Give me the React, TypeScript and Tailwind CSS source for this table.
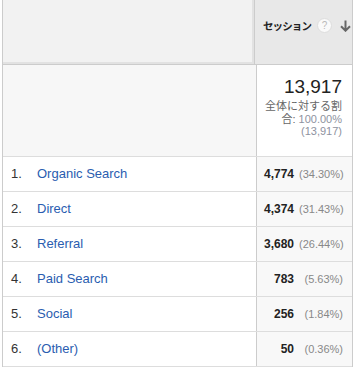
const rows = [
  { name: "Organic Search", value: "4,774", pct: "(34.30%)" },
  { name: "Direct", value: "4,374", pct: "(31.43%)" },
  { name: "Referral", value: "3,680", pct: "(26.44%)" },
  { name: "Paid Search", value: "783", pct: "(5.63%)" },
  { name: "Social", value: "256", pct: "(1.84%)" },
  { name: "(Other)", value: "50", pct: "(0.36%)" },
];

const font = { fontFamily: '"Liberation Sans", Arial, "Noto Sans CJK JP", sans-serif' };

export default function App() {
  return (
    <div className="h-[369px] w-[355px] overflow-hidden bg-white pl-[2px]" style={font}>
      <div className="w-[351px] border-x border-[#cccccc]">
        {/* header */}
        <div className="flex h-[65px] border-b border-[#cccccc]">
          <div className="w-[251px] border-b-2 border-r-2 border-[#e2e2e2] bg-[#f2f2f2]" />
          <div className="flex flex-1 items-center whitespace-nowrap border-l border-[#cccccc] bg-[#e8e8e8] pb-[13px] pl-[8px]">
            <span className="text-[10.5px] font-bold tracking-[-0.9px] text-[#222]" style={{ fontFamily: '"Noto Sans CJK JP", sans-serif' }}>
              セッション
            </span>
            <span className="ml-[6px] flex h-[15px] w-[15px] shrink-0 items-center justify-center rounded-full border border-[#dddddd] bg-[#fafafa] text-[10px] text-[#bbbbbb]">
              ?
            </span>
            <svg className="ml-[8px] shrink-0" width="11" height="12" viewBox="0 0 11 12">
              <path d="M5.5 0.5 V10.5 M1 6.2 L5.5 10.7 L10 6.2" stroke="#666" strokeWidth="2" fill="none" />
            </svg>
          </div>
        </div>
        {/* summary */}
        <div className="flex h-[92px] border-b border-[#dddddd]">
          <div className="w-[253px] bg-[#f7f7f7]" />
          <div className="flex flex-1 flex-col items-end border-l border-[#cccccc] bg-white pr-[10px] pt-[11px]">
            <div className="text-[19px] leading-[22px] text-[#222]">13,917</div>
            <div className="mt-[2px] text-right text-[11px] leading-[12.5px] text-[#666]" style={{ fontFamily: '"Liberation Sans", "Noto Sans CJK JP", sans-serif' }}>
              <div>全体に対する割</div>
              <div>
                合: <span className="text-[#8e92a0]">100.00%</span>
              </div>
              <div className="text-[#8e92a0]">(13,917)</div>
            </div>
          </div>
        </div>
        {/* rows */}
        {rows.map((r, i) => (
          <div key={r.name} className="flex h-[35px] border-b border-[#dddddd]">
            <div className="flex w-[253px] items-center bg-white text-[13px]">
              <span className="w-[34px] pl-[8px] text-[#333]">{i + 1}.</span>
              <span className="text-[#2a5db0]">{r.name}</span>
            </div>
            <div className="flex flex-1 items-center justify-end border-l border-[#cccccc] bg-[#f8f8f8] pr-[9px]">
              <span className="text-[12px] font-bold text-[#222]">{r.value}</span>
              <span className="ml-[5px] w-[44px] text-right text-[11px] text-[#888]">{r.pct}</span>
            </div>
          </div>
        ))}
      </div>
    </div>
  );
}
